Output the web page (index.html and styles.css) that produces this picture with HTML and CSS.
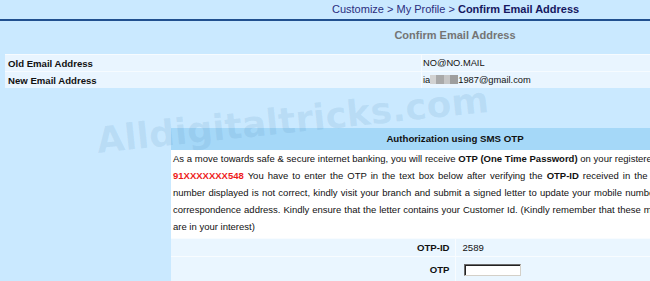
FILE: index.html
```html
<!DOCTYPE html>
<html>
<head>
<meta charset="utf-8">
<title>Confirm Email Address</title>
<link rel="stylesheet" href="styles.css">
</head>
<body>
<div class="page">
  <div class="crumbs">Customize &gt; My Profile &gt; <b class="crumb-current">Confirm Email Address</b></div>
  <div class="rule"></div>
  <main class="content">
    <h1 class="title">Confirm Email Address</h1>
    <table class="info">
      <tr><th>Old Email Address</th><td>NO@NO.MAIL</td></tr>
      <tr><th>New Email Address</th><td>ia<span class="blur"></span>1987@gmail.com</td></tr>
    </table>
    <section class="auth">
      <h2 class="auth-head">Authorization using SMS OTP</h2>
      <div class="auth-text">
        <span class="line l1">As a move towards safe &amp; secure internet banking, you will receive <b>OTP (One Time Password)</b> on your registered mobile number</span>
        <span class="line l2"><b class="red">91XXXXXXX548</b> You have to enter the OTP in the text box below after verifying the <b>OTP-ID</b> received in the SMS. If the mobile</span>
        <span class="line l3">number displayed is not correct, kindly visit your branch and submit a signed letter to update your mobile number and</span>
        <span class="line l4">correspondence address. Kindly ensure that the letter contains your Customer Id. (Kindly remember that these measures</span>
        <span class="line l5">are in your interest)</span>
      </div>
      <table class="otp">
        <tr class="otp-id"><th>OTP-ID</th><td>2589</td></tr>
        <tr class="otp-entry"><th>OTP</th><td><input class="otp-input" type="text"></td></tr>
      </table>
    </section>
  </main>
  <div class="watermark">Alldigitaltricks.com</div>
</div>
</body>
</html>
```

FILE: styles.css
```css
html, body {
  margin: 0;
  padding: 0;
  overflow: hidden;
  background: #cae9ff;
}

body {
  font-family: "Liberation Sans", Arial, sans-serif;
  color: #111;
}

.page {
  position: relative;
  width: 910px;
  height: 281px;
}

.crumbs {
  height: 19px;
  line-height: 19px;
  padding-left: 332px;
  font-size: 11px;
  color: #2b2e80;
  white-space: nowrap;
}

.crumb-current {
  color: #16185f;
}

.rule {
  height: 2px;
  background: #21508f;
}

.content {
  width: 900px;
  margin-left: 5px;
}

.title {
  margin: 7px 0 12px;
  font-size: 11px;
  line-height: 14px;
  text-align: center;
  color: #747474;
  font-weight: bold;
}

.info {
  width: 100%;
  border-collapse: collapse;
  font-size: 9.6px;
}

.info th,
.info td {
  height: 16px;
  padding: 0;
  background: #e9f5ff;
  border-top: 1px solid #f6fbff;
  text-align: left;
  vertical-align: middle;
}

.info th {
  width: 413px;
  padding-left: 3px;
}

.info td {
  border-left: 1px solid #f6fbff;
  padding-left: 1px;
  font-weight: normal;
  font-size: 9.3px;
}

.blur {
  display: inline-block;
  width: 28px;
  height: 9px;
  vertical-align: -1px;
  background: linear-gradient(90deg, #d2d2d2 0 22%, #a9a9a9 22% 50%, #c6c6c6 50% 72%, #9e9e9e 72% 100%);
}

.auth {
  width: 568px;
  margin: 40px auto 0;
  background: #fff;
}

.auth-head {
  margin: 0;
  height: 22px;
  line-height: 22px;
  background: #a5d8f8;
  font-size: 9.7px;
  font-weight: bold;
  text-align: center;
  color: #111;
}

.auth-text {
  padding: 0 2px 3px;
  font-size: 9.5px;
  line-height: 17px;
  overflow: hidden;
}

.line {
  display: block;
  white-space: nowrap;
}

.l1 { word-spacing: 0.1px; }
.l2 { word-spacing: 1.4px; }
.l3 { word-spacing: 0.6px; }
.l4 { word-spacing: 0.3px; }

.red {
  color: #ee1c1c;
}

.otp {
  width: 100%;
  border-collapse: collapse;
  font-size: 9.6px;
}

.otp th,
.otp td {
  padding: 0;
  background: #eaf6ff;
  border-top: 1px solid #f8fcff;
  vertical-align: middle;
}

.otp-id th,
.otp-id td {
  height: 17px;
}

.otp-entry th,
.otp-entry td {
  height: 25px;
}

.otp th {
  width: 50%;
  text-align: right;
  padding-right: 5px;
}

.otp td {
  border-left: 1px solid #f8fcff;
  padding-left: 7px;
  text-align: left;
}

.otp-input {
  display: block;
  box-sizing: border-box;
  width: 57px;
  height: 12px;
  margin: 0 0 0 1px;
  padding: 0;
  background: #fff;
  border-style: solid;
  border-width: 1px;
  border-color: #6b6b6b #d4d0c8 #d4d0c8 #6b6b6b;
  box-shadow: inset 1px 1px 0 #222;
}

.watermark {
  position: absolute;
  left: 98px;
  top: 123px;
  font-family: "DejaVu Sans", sans-serif;
  font-weight: bold;
  font-size: 36px;
  line-height: 36px;
  color: rgba(70, 130, 180, 0.13);
  transform: rotate(-6deg);
  transform-origin: 0 30px;
  white-space: nowrap;
  pointer-events: none;
}
```
